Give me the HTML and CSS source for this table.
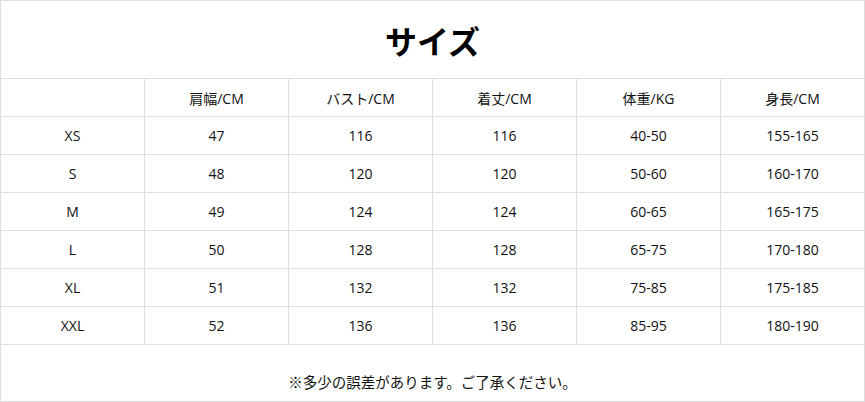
FILE: index.html
```html
<!DOCTYPE html>
<html lang="ja">
<head>
<meta charset="utf-8">
<link rel="stylesheet" href="styles.css">
</head>
<body>
<div class="sheet">
  <div class="title">サイズ</div>
  <div class="grid">
    <div class="cell"></div><div class="cell">肩幅/CM</div><div class="cell">バスト/CM</div><div class="cell">着丈/CM</div><div class="cell">体重/KG</div><div class="cell">身長/CM</div>
    <div class="cell">XS</div><div class="cell">47</div><div class="cell">116</div><div class="cell">116</div><div class="cell">40-50</div><div class="cell">155-165</div>
    <div class="cell">S</div><div class="cell">48</div><div class="cell">120</div><div class="cell">120</div><div class="cell">50-60</div><div class="cell">160-170</div>
    <div class="cell">M</div><div class="cell">49</div><div class="cell">124</div><div class="cell">124</div><div class="cell">60-65</div><div class="cell">165-175</div>
    <div class="cell">L</div><div class="cell">50</div><div class="cell">128</div><div class="cell">128</div><div class="cell">65-75</div><div class="cell">170-180</div>
    <div class="cell">XL</div><div class="cell">51</div><div class="cell">132</div><div class="cell">132</div><div class="cell">75-85</div><div class="cell">175-185</div>
    <div class="cell">XXL</div><div class="cell">52</div><div class="cell">136</div><div class="cell">136</div><div class="cell">85-95</div><div class="cell">180-190</div>
  </div>
  <div class="note">※多少の誤差があります。ご了承ください。</div>
</div>
</body>
</html>
```
FILE: styles.css
```css
html, body {
  margin: 0;
  padding: 0;
  background: #fff;
}
body {
  font-family: "Noto Sans CJK JP", "Noto Sans", sans-serif;
  color: #111;
}
.sheet {
  width: 865px;
  height: 402px;
  box-sizing: border-box;
  border: 1px solid #dddddd;
  display: flex;
  flex-direction: column;
}
.title {
  height: 77px;
  border-bottom: 1px solid #dddddd;
  display: flex;
  align-items: center;
  justify-content: center;
  font-size: 32px;
  font-weight: 700;
  color: #000;
  line-height: 1;
}
.grid {
  display: grid;
  grid-template-columns: 144px 144px 144px 144px 144px 143px;
  grid-auto-rows: 38px;
}
.cell {
  display: flex;
  align-items: center;
  justify-content: center;
  font-family: "Open Sans", "Noto Sans CJK JP", sans-serif;
  font-size: 14px;
  border-bottom: 1px solid #dddddd;
  border-right: 1px solid #dddddd;
  box-sizing: border-box;
}
.cell:nth-child(6n) {
  border-right: none;
}
.note {
  flex: 1;
  display: flex;
  align-items: flex-end;
  justify-content: center;
  padding-bottom: 9px;
  font-size: 14.5px;
}
```
